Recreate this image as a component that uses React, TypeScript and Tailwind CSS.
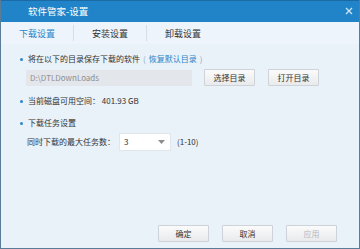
import React from "react";

const font = { fontFamily: '"Noto Sans CJK SC", "Liberation Sans", sans-serif' };

function Btn({ children, disabled }: { children: React.ReactNode; disabled?: boolean }) {
  return (
    <div
      className={`w-[51px] h-[17px] flex items-center justify-center border border-[#cdd3d9] rounded-[1px] bg-gradient-to-b from-[#fbfbfb] to-[#e9eaeb] text-[8px] leading-none ${
        disabled ? "text-[#b5b8bb]" : "text-[#333]"
      }`}
    >
      {children}
    </div>
  );
}

function Bullet() {
  return <div className="w-[3px] h-[3px] rounded-full bg-[#2b86c8] mr-[5px]" />;
}

export default function App() {
  return (
    <div
      style={font}
      className="w-[360px] h-[249px] flex flex-col bg-[#e9f1f9] border-x border-b border-[#5b7c98] overflow-hidden"
    >
      <div className="h-[22px] shrink-0 bg-[#2184c8] border-t border-[#1b6aa3] flex items-center justify-between pl-[27px] pr-[6px]">
        <span className="text-white text-[9.5px] leading-none">软件管家-设置</span>
        <svg width="8" height="8" viewBox="0 0 8 8" className="mb-[1px]">
          <path d="M1 1L7 7M7 1L1 7" stroke="#cfe4f4" strokeWidth="1.3" />
        </svg>
      </div>
      <div className="h-[22px] shrink-0 flex items-center bg-[#edf4fb]">
        <div className="w-[72px] text-center text-[9px] leading-none text-[#2a86c8]">下载设置</div>
        <div className="w-px h-[16px] bg-[#d6dee6]" />
        <div className="w-[72px] text-center text-[9px] leading-none text-[#333]">安装设置</div>
        <div className="w-px h-[16px] bg-[#d6dee6]" />
        <div className="w-[72px] text-center text-[9px] leading-none text-[#333]">卸载设置</div>
      </div>
      <div className="flex-1 flex flex-col pl-[19px] text-[8px] leading-none text-[#333]">
        <div className="flex items-center mt-[10px] h-[10px]">
          <Bullet />
          <span>将在以下的目录保存下载的软件</span>
          <span className="text-[#8aa9c2] mx-[3px]">(</span>
          <span className="text-[#2a86c8]">恢复默认目录</span>
          <span className="text-[#8aa9c2] ml-[3px]">)</span>
        </div>
        <div className="flex items-center mt-[5px] ml-[6px]">
          <div className="w-[166px] h-[16px] bg-[#e3e6ea] flex items-center pl-[4px] text-[#8c8f93]">
            D:\DTLDownLoads
          </div>
          <div className="ml-[12px]">
            <Btn>选择目录</Btn>
          </div>
          <div className="ml-[13px]">
            <Btn>打开目录</Btn>
          </div>
        </div>
        <div className="flex items-center mt-[10px] h-[10px]">
          <Bullet />
          <span>当前磁盘可用空间：&nbsp;401.93 GB</span>
        </div>
        <div className="flex items-center mt-[12px] h-[10px]">
          <Bullet />
          <span>下载任务设置</span>
        </div>
        <div className="flex items-center mt-[5px] ml-[7px]">
          <span className="w-[92px]">同时下载的最大任务数：</span>
          <div className="w-[52px] h-[18px] bg-white border border-[#e1e6eb] flex items-center justify-between pl-[4px] pr-[5px]">
            <span>3</span>
            <svg width="7" height="4" viewBox="0 0 7 4">
              <path d="M0 0H7L3.5 4Z" fill="#8a8d90" />
            </svg>
          </div>
          <span className="ml-[6px]">(1-10)</span>
        </div>
        <div className="flex-1" />
        <div className="flex items-center justify-end gap-[13px] pr-[22px] mb-[6px]">
          <Btn>确定</Btn>
          <Btn>取消</Btn>
          <Btn disabled>应用</Btn>
        </div>
      </div>
    </div>
  );
}
